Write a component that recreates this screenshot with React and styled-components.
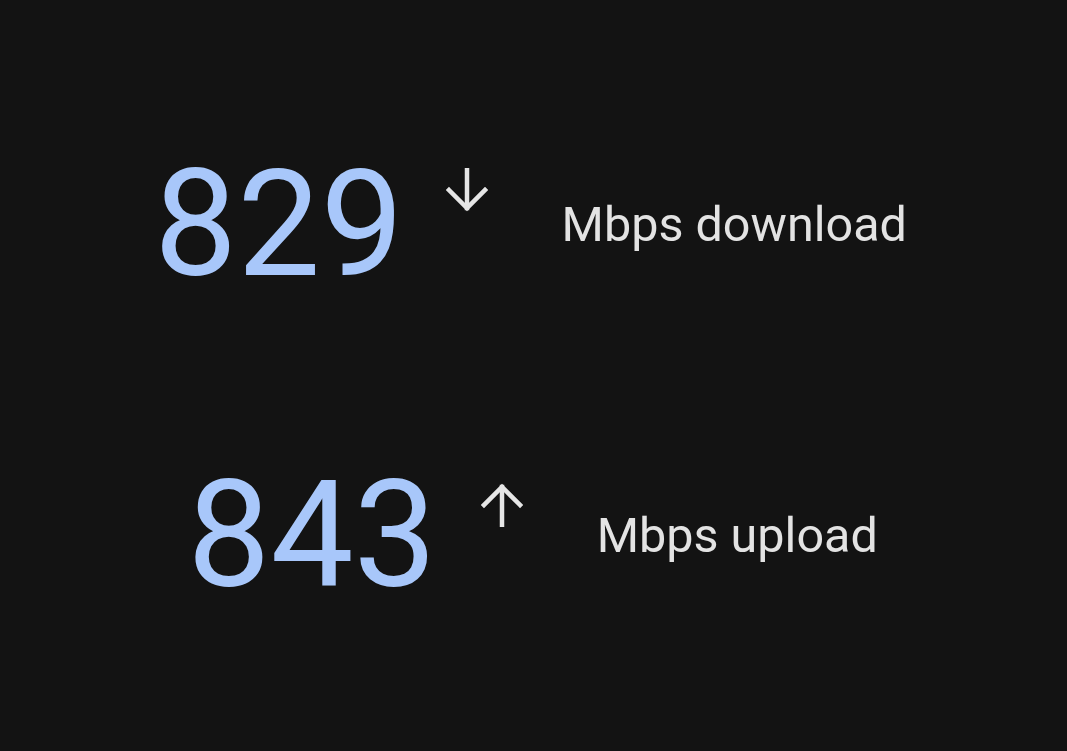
import styled, { createGlobalStyle } from "styled-components";

const GlobalStyle = createGlobalStyle`
    html, body {
        margin: 0;
        padding: 0;
        background: #131313;
    }
    body {
        font-family: Roboto, "Noto Sans", sans-serif;
    }
`;

const Page = styled.div`
    width: 100%;
    height: 751px;
    box-sizing: border-box;
    padding-top: 151px;
    display: flex;
    flex-direction: column;
    gap: 163px;
    background: #131313;
`;

const Row = styled.div`
    display: flex;
    align-items: flex-start;
    justify-content: center;
    padding-right: ${(p) => p.$shift || 0}px;
`;

const Value = styled.div`
    font-size: 148px;
    line-height: 1;
    font-weight: 400;
    color: #a8c7fa;
`;

const ArrowBox = styled.div`
    margin-top: ${(p) => p.$top}px;
    margin-left: ${(p) => p.$left}px;
    margin-right: ${(p) => p.$right}px;
    width: 42px;
    height: 44px;
    color: #e6e6e6;
    svg {
        display: block;
    }
`;

const Label = styled.div`
    margin-top: 50px;
    font-size: 48.5px;
    line-height: 1;
    color: #e3e3e3;
`;

// flecha simple, la rotamos para subida
function Arrow({ up }) {
    return (
        <svg width="42" height="44" viewBox="0 0 42 44" fill="none"
            stroke="currentColor" strokeWidth="4.5" strokeLinecap="square"
            style={up ? { transform: "rotate(180deg)" } : undefined}>
            <path d="M21 2 V40" />
            <path d="M3 22 L21 40 L39 22" strokeLinejoin="miter" />
        </svg>
    );
}

export default function App() {
    return (
        <>
            <GlobalStyle />
            <Page>
                <Row $shift={6}>
                    <Value>829</Value>
                    <ArrowBox $top={17} $left={42} $right={74}>
                        <Arrow />
                    </ArrowBox>
                    <Label>Mbps download</Label>
                </Row>
                <Row $shift={2}>
                    <Value>843</Value>
                    <ArrowBox $top={21} $left={44} $right={74}>
                        <Arrow up />
                    </ArrowBox>
                    <Label>Mbps upload</Label>
                </Row>
            </Page>
        </>
    );
}
